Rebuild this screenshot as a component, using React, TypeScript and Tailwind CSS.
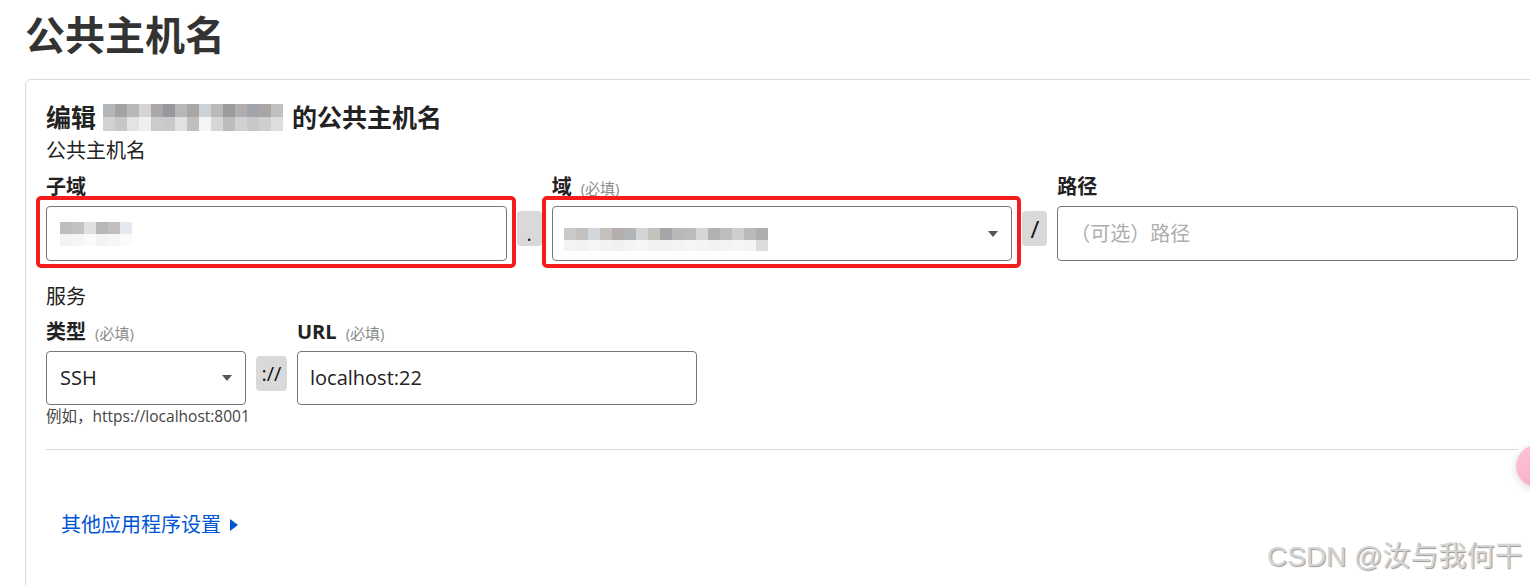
import type { ReactNode } from 'react';

// mosaic colours read off the blurred areas, one array per row
const HEAD_TOP = [
  'bg-[#b4b7ba]', 'bg-[#a3a3a3]', 'bg-[#b8b8b8]', 'bg-[#d4d4d4]', 'bg-[#aaa7a6]',
  'bg-[#969a9e]', 'bg-[#b8b6b6]', 'bg-[#a9a7a6]', 'bg-[#cdd2d6]', 'bg-[#b9b9b9]',
  'bg-[#9c9a9a]', 'bg-[#b0aeae]', 'bg-[#a2a4ab]', 'bg-[#a9a5a5]', 'bg-[#c0c0c0]',
];
const HEAD_BOTTOM = [
  'bg-[#d1d1d3]', 'bg-[#c7c7c7]', 'bg-[#e3e3e3]', 'bg-[#efefeb]', 'bg-[#cbcbcb]',
  'bg-[#c9c9ca]', 'bg-[#e1e1e1]', 'bg-[#c0bfbd]', 'bg-[#f3f5f7]', 'bg-[#d6d6d6]',
  'bg-[#bcbcbc]', 'bg-[#d1d1d1]', 'bg-[#c9c6c7]', 'bg-[#cfcfcf]', 'bg-[#dddddd]',
];
const SUB_TOP = ['bg-[#bdbdbd]', 'bg-[#c2c2c2]', 'bg-[#e0e0e0]', 'bg-[#b7b7b7]', 'bg-[#c0bfbd]', 'bg-[#e4e8ef]'];
const SUB_BOTTOM = ['bg-[#f3f3f3]', 'bg-[#f5f5f5]', 'bg-[#fafafa]', 'bg-[#f3f3f3]', 'bg-[#f6f6f6]', 'bg-[#fafafa]'];
const DOMAIN_TOP = [
  'bg-[#c9c9c9]', 'bg-[#c4c0bd]', 'bg-[#d3d7db]', 'bg-[#c3c0be]', 'bg-[#b3aeac]', 'bg-[#b1b4b7]',
  'bg-[#d3d3d3]', 'bg-[#c5c1bd]', 'bg-[#a6a6a8]', 'bg-[#b6b8ba]', 'bg-[#b9bbbd]', 'bg-[#d6d6d6]',
  'bg-[#b1b1b1]', 'bg-[#bdbdbd]', 'bg-[#d0cecc]', 'bg-[#b9b9b9]', 'bg-[#aeaeae]',
];
const DOMAIN_BOTTOM = [
  'bg-[#f3f3f3]', 'bg-[#f1f1f1]', 'bg-[#f5f5f5]', 'bg-[#f2f2f2]', 'bg-[#f0f0f0]', 'bg-[#f4f4f4]',
  'bg-[#f6f6f6]', 'bg-[#f2f2f2]', 'bg-[#f1f1f1]', 'bg-[#f3f3f3]', 'bg-[#f5f5f5]', 'bg-[#f4f4f4]',
  'bg-[#f2f2f2]', 'bg-[#f3f3f3]', 'bg-[#f6f6f6]', 'bg-[#f4f4f4]', 'bg-[#dcdcdc]',
];

function Mosaic({ rows, cell, heights }: { rows: string[][]; cell: string; heights: string[] }) {
  return (
    <span className="inline-flex flex-col align-middle">
      {rows.map((row, r) => (
        <span key={r} className="flex">
          {row.map((c, i) => (
            <span key={i} className={`${cell} ${heights[r]} ${c}`} />
          ))}
        </span>
      ))}
    </span>
  );
}

function Caret() {
  return (
    <span className="absolute right-[13px] top-1/2 -translate-y-1/2 w-0 h-0 border-l-[5.5px] border-r-[5.5px] border-t-[6px] border-l-transparent border-r-transparent border-t-[#555]" />
  );
}

function Sep({ children, w, size = 'text-[20px]' }: { children: ReactNode; w: string; size?: string }) {
  return (
    <div className={`${w} ${size} mt-[5px] h-[35px] rounded-[4px] bg-[#d9d9d9] flex items-center justify-center leading-none text-[#111]`}>
      {children}
    </div>
  );
}

function Label({ text, required }: { text: string; required?: boolean }) {
  return (
    <div className="h-[26px] flex items-center text-[20px] leading-[26px] font-bold text-[#222] whitespace-nowrap">
      {text}
      {required && <span className="ml-[9px] mt-[2px] text-[15px] leading-none font-normal text-[#8c8c8c]">(必填)</span>}
    </div>
  );
}

function RedMark() {
  return <span className="absolute -left-[10px] -right-[9px] -top-[10px] -bottom-[7px] border-4 border-[#f51c1c] rounded-[5px] pointer-events-none" />;
}

export default function App() {
  return (
    <div className="relative w-[1530px] h-[585px] overflow-hidden bg-white pl-[25px] font-['Open_Sans','Noto_Sans_CJK_SC',sans-serif] text-[#222]">
      <h1 className="pt-[10px] leading-[50px] text-[40px] font-bold text-[#333]">公共主机名</h1>

      <div className="mt-[19px] w-[1514px] border border-[#d9d9d9] rounded-[6px] px-[20px] pt-[21px] pb-[60px]">
        <h2 className="h-[32px] leading-[32px] text-[25px] font-bold text-[#222] flex items-center whitespace-nowrap">
          编辑
          <span className="ml-[7px] mr-[9px] flex">
            <Mosaic rows={[HEAD_TOP, HEAD_BOTTOM]} cell="w-[12px]" heights={['h-[13px]', 'h-[14px]']} />
          </span>
          的公共主机名
        </h2>
        <div className="mt-[5px] h-[26px] leading-[26px] text-[20px]">公共主机名</div>

        {/* hostname row */}
        <div className="mt-[10px] grid grid-cols-[1fr_25px_1fr_25px_1fr] gap-x-[10px]">
          <Label text="子域" />
          <div />
          <Label text="域" required />
          <div />
          <Label text="路径" />

          <div className="relative mt-[6px] h-[55px]">
            <div className="h-full border border-[#777] rounded-[4px] pl-[13px] flex items-center">
              <Mosaic rows={[SUB_TOP, SUB_BOTTOM]} cell="w-[12px]" heights={['h-[12px]', 'h-[12px]']} />
            </div>
            <RedMark />
          </div>
          <div className="mt-[6px]">
            <Sep w="w-[25px]"><span className="pt-[10px]">.</span></Sep>
          </div>
          <div className="relative mt-[6px] h-[55px]">
            <div className="relative h-full border border-[#777] rounded-[4px] pl-[11px] flex items-center">
              <span className="mt-[10px]">
                <Mosaic rows={[DOMAIN_TOP, DOMAIN_BOTTOM]} cell="w-[12px]" heights={['h-[12px]', 'h-[11px]']} />
              </span>
              <Caret />
            </div>
            <RedMark />
          </div>
          <div className="mt-[6px]">
            <Sep w="w-[25px]" size="text-[24px]">/</Sep>
          </div>
          <div className="mt-[6px] h-[55px] border border-[#777] rounded-[4px] pl-[12px] flex items-center text-[20px] text-[#adadad]">
            （可选）路径
          </div>
        </div>

        <div className="mt-[23px] h-[26px] leading-[26px] text-[20px]">服务</div>

        {/* service row */}
        <div className="mt-[9px] grid grid-cols-[200px_31px_400px] gap-x-[10px]">
          <Label text="类型" required />
          <div />
          <Label text="URL" required />

          <div className="mt-[6px]">
            <div className="relative h-[54px] border border-[#777] rounded-[4px] pl-[13px] flex items-center text-[20px] text-[#222]">
              SSH
              <Caret />
            </div>
            <div className="mt-[1px] h-[20px] leading-[20px] text-[15.5px] text-[#444] whitespace-nowrap">例如，https://localhost:8001</div>
          </div>
          <div className="mt-[6px]">
            <Sep w="w-[31px]">://</Sep>
          </div>
          <div className="mt-[6px] h-[54px] border border-[#777] rounded-[4px] pl-[12px] flex items-center text-[20px] text-[#222]">
            localhost:22
          </div>
        </div>

        <div className="mt-[23px] border-t border-[#d9d9d9]" />

        <button className="mt-[62px] ml-[15px] h-[26px] flex items-center gap-[9px] leading-[26px] text-[20px] text-[#0055d4]">
          其他应用程序设置
          <span className="w-0 h-0 border-t-[6px] border-b-[6px] border-l-[8px] border-t-transparent border-b-transparent border-l-[#0055d4]" />
        </button>
      </div>

      {/* floating helper button, cut off at the edge */}
      <div className="absolute left-[1516px] top-[445px] w-[42px] h-[42px] rounded-full bg-gradient-to-br from-[#fcc6d8] to-[#f6a5c2] shadow-[0_2px_8px_rgba(0,0,0,0.15)]" />

      {/* watermark */}
      <div className="absolute left-[1267px] top-[539px] text-[28px] leading-[36px] text-[#d4d4d4] font-['Liberation_Sans','Noto_Sans_CJK_SC',sans-serif] [text-shadow:1px_1px_1px_#9a9a9a] whitespace-nowrap">
        CSDN @汝与我何干
      </div>
    </div>
  );
}
